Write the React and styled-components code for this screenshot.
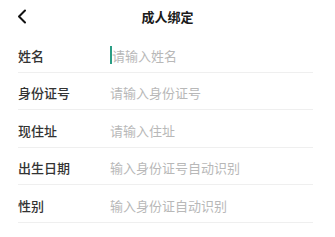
import React from 'react';
import styled, { createGlobalStyle } from 'styled-components';

const Global = createGlobalStyle`
    html, body {
        margin: 0;
        padding: 0;
        background: #ffffff;
        font-family: "Noto Sans CJK SC", "Noto Sans", sans-serif;
    }
`

const Page = styled.div`
    width: 335px;
    height: 237px;
    overflow: hidden;
    background: #fff;
`

const Header = styled.div`
    height: 35px;
    display: grid;
    grid-template-columns: 40px 1fr 40px;
    align-items: center;
`

const Back = styled.div`
    display: flex;
    align-items: center;
    padding-left: 17px;
    padding-bottom: 3px;
    height: 100%;
    box-sizing: border-box;
`

const Title = styled.div`
    text-align: center;
    font-size: 13px;
    font-weight: 700;
    color: #1a1a1a;
    padding-bottom: 3px;
`

const Form = styled.div`
    padding: 0 22px 0 18px;
`

const Row = styled.div`
    height: 37.5px;
    display: flex;
    align-items: center;
    border-bottom: 1px solid #efefef;
    padding-top: 4px;
    box-sizing: border-box;
`

const Label = styled.div`
    width: 92px;
    flex-shrink: 0;
    font-size: 13px;
    font-weight: 500;
    color: #333;
`

const Field = styled.div`
    display: flex;
    align-items: center;
    flex: 1;
`

const Caret = styled.span`
    width: 2px;
    height: 18px;
    background: #2a9d84;
`

const Input = styled.input`
    flex: 1;
    border: none;
    outline: none;
    padding: 0;
    font-family: inherit;
    font-size: 13px;
    color: #333;
    background: transparent;
    &::placeholder {
        color: #b8b8b8;
    }
`

const fields = [
    { label: '姓名', placeholder: '请输入姓名', focused: true },
    { label: '身份证号', placeholder: '请输入身份证号' },
    { label: '现住址', placeholder: '请输入住址' },
    { label: '出生日期', placeholder: '输入身份证号自动识别' },
    { label: '性别', placeholder: '输入身份证自动识别' },
]

const App = () => {
    return (
        <Page>
            <Global />
            <Header>
                <Back>
                    <svg width="10" height="15" viewBox="0 0 10 15">
                        <path d="M8 1.5 L2 7.5 L8 13.5" fill="none" stroke="#111" strokeWidth="2" strokeLinecap="round" strokeLinejoin="round" />
                    </svg>
                </Back>
                <Title>成人绑定</Title>
                <div />
            </Header>
            <Form>
                {fields.map((f) => (
                    <Row key={f.label}>
                        <Label>{f.label}</Label>
                        <Field>
                            {f.focused && <Caret />}
                            <Input placeholder={f.placeholder} />
                        </Field>
                    </Row>
                ))}
            </Form>
        </Page>
    );
};

export default App;
